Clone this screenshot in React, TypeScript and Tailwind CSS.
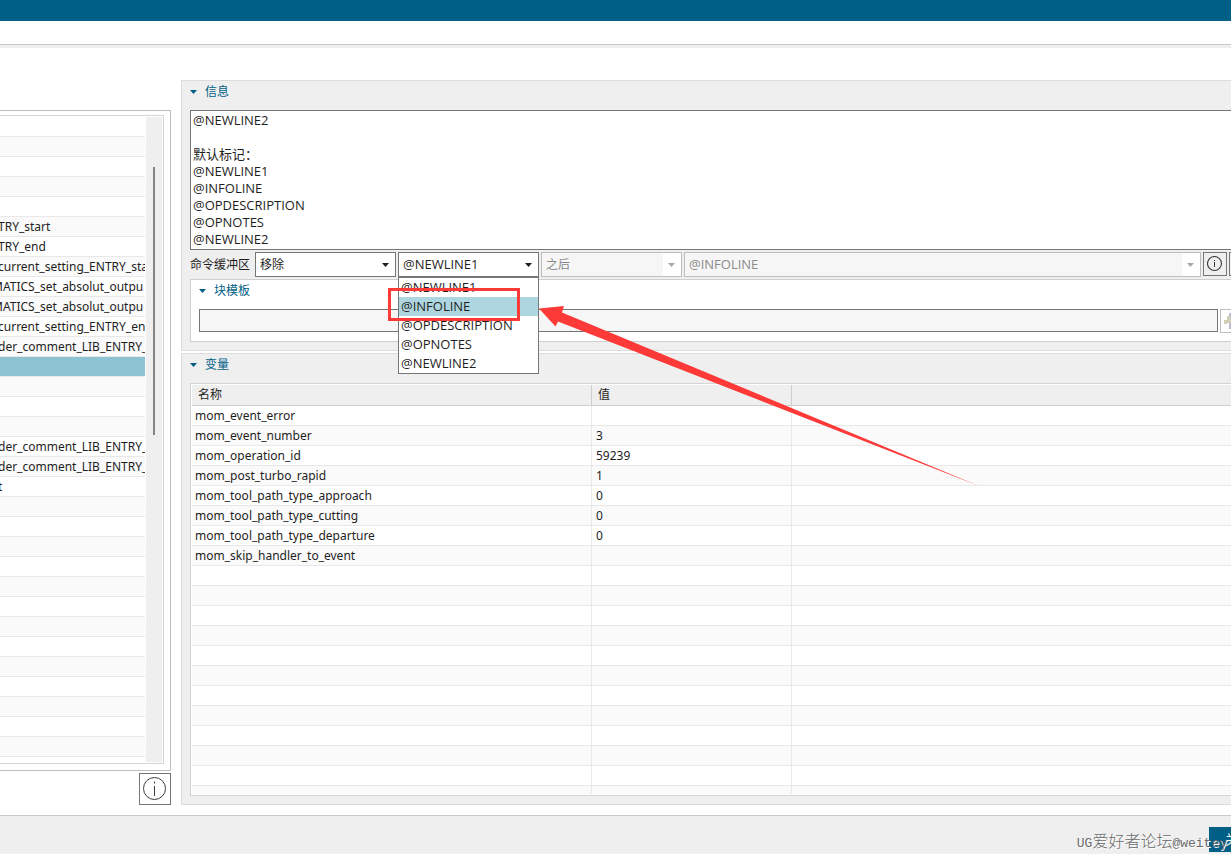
import type { ReactNode } from "react";
import clsx from "clsx";

type Row = { name: string; value?: string };

const MESSAGE = [
  "@NEWLINE2",
  "",
  "默认标记：",
  "@NEWLINE1",
  "@INFOLINE",
  "@OPDESCRIPTION",
  "@OPNOTES",
  "@NEWLINE2",
].join("\n");

const MARKERS = ["@NEWLINE1", "@INFOLINE", "@OPDESCRIPTION", "@OPNOTES", "@NEWLINE2"];

const VARIABLES: Row[] = [
  { name: "mom_event_error" },
  { name: "mom_event_number", value: "3" },
  { name: "mom_operation_id", value: "59239" },
  { name: "mom_post_turbo_rapid", value: "1" },
  { name: "mom_tool_path_type_approach", value: "0" },
  { name: "mom_tool_path_type_cutting", value: "0" },
  { name: "mom_tool_path_type_departure", value: "0" },
  { name: "mom_skip_handler_to_event" },
];

const EVENTS: Record<number, string> = {
  5: "TRY_start",
  6: "TRY_end",
  7: "current_setting_ENTRY_sta",
  8: "MATICS_set_absolut_outpu",
  9: "MATICS_set_absolut_outpu",
  10: "current_setting_ENTRY_en",
  11: "der_comment_LIB_ENTRY_",
  16: "der_comment_LIB_ENTRY_",
  17: "der_comment_LIB_ENTRY_",
  18: "t",
};

const EVENT_ROWS = 33;
const SELECTED_EVENT = 12;
const VARIABLE_ROWS = 20;

function Caret({ className }: { className?: string }) {
  return (
    <svg viewBox="0 0 7 4" className={clsx("h-1 w-[7px]", className)} aria-hidden="true">
      <path d="M0 0h7L3.5 4z" fill="currentColor" />
    </svg>
  );
}

function InfoIcon() {
  return (
    <svg viewBox="0 0 24 24" width={24} height={24} fill="none" stroke="#3c3c3c" aria-hidden="true">
      <circle cx="11.5" cy="11.5" r="11" />
      <path d="M11.5 9v10M11.5 4.5v2" />
    </svg>
  );
}

function SmallInfoIcon() {
  return (
    <svg viewBox="0 0 16 16" width={16} height={16} fill="none" stroke="#3c3c3c" aria-hidden="true">
      <circle cx="7.5" cy="7.5" r="7" strokeWidth="1.1" />
      <path d="M7.5 6v5M7.5 4v1" />
    </svg>
  );
}

function SectionTitle({ children }: { children: ReactNode }) {
  return (
    <h2 className="flex h-[22px] items-center gap-2 text-[12px] text-[#005f87]">
      <Caret />
      {children}
    </h2>
  );
}

type ComboProps = {
  label: string;
  value: string;
  options?: string[];
  disabled?: boolean;
  className?: string;
  children?: ReactNode;
};

function Combo({ label, value, options = [value], disabled, className, children }: ComboProps) {
  return (
    <div className={clsx("relative h-[25px]", className)}>
      <select
        aria-label={label}
        defaultValue={value}
        disabled={disabled}
        className={clsx(
          "h-full w-full appearance-none border pl-1 pr-5 opacity-100",
          disabled
            ? "border-[#bdbdbd] bg-[#f6f6f6] text-[#8a8a8a]"
            : "border-[#767676] bg-white text-[#1e1e1e]",
        )}
      >
        {options.map((option) => (
          <option key={option}>{option}</option>
        ))}
      </select>
      <span
        className={clsx(
          "pointer-events-none absolute inset-y-px right-px flex w-[18px] items-center justify-center bg-white pr-px",
          disabled ? "text-[#a8a8a8]" : "text-[#1e1e1e]",
        )}
      >
        <Caret />
      </span>
      {children}
    </div>
  );
}

function MarkerPopup() {
  return (
    <ul
      role="listbox"
      aria-label="标记"
      className="absolute inset-x-0 top-full z-10 border border-[#767676] bg-white leading-[19px]"
    >
      {MARKERS.map((marker) => (
        <li
          key={marker}
          role="option"
          aria-selected={marker === "@INFOLINE"}
          className={clsx("h-[19px] pl-[2px]", marker === "@INFOLINE" && "bg-[#aed6e0]")}
        >
          {marker}
        </li>
      ))}
    </ul>
  );
}

function EventList() {
  return (
    <div className="border-y border-r border-[#bdbdbd] pb-1.5 pr-[6px] pt-1">
      <div className="flex h-[649px] justify-between overflow-hidden border-y border-r border-[#d4d4d4] py-px pr-px">
        <table className="h-0 w-[145px] table-fixed border-separate border-spacing-0 font-['Noto_Sans',sans-serif] text-[12px]">
          <tbody>
            {Array.from({ length: EVENT_ROWS }, (_, i) => (
              <tr
                key={i}
                className={i === SELECTED_EVENT ? "bg-[#8cc2d2]" : i % 2 === 1 ? "bg-[#fafafa]" : "bg-white"}
              >
                <td className="overflow-hidden whitespace-nowrap border-b border-[#e8e8e8] p-0">
                  <div className={clsx("h-[19px] leading-[19px]", EVENTS[i]?.startsWith("M") ? "-ml-2" : "-ml-0.5")}>
                    {EVENTS[i]}
                  </div>
                </td>
              </tr>
            ))}
          </tbody>
        </table>
        <div className="w-4 bg-[#efefef] pt-[50px]">
          <div className="mx-auto h-[268px] w-[2px] bg-[#868686]" />
        </div>
      </div>
    </div>
  );
}

function VariableTable() {
  return (
    <div className="h-[413px] overflow-hidden border border-[#d4d4d4] bg-white p-px">
      <div className="h-full overflow-hidden">
        <table className="w-full table-fixed border-separate border-spacing-0 text-left font-['Noto_Sans','Noto_Sans_CJK_SC',sans-serif] text-[12px]">
          <colgroup>
            <col className="w-[400px]" />
            <col className="w-[200px]" />
            <col />
          </colgroup>
          <thead>
            <tr className="bg-[#efefef]">
              <th className="h-[21px] border-b border-r border-[#cfcfcf] p-0 pl-[6px] font-normal leading-5">名称</th>
              <th className="border-b border-r border-[#cfcfcf] p-0 pl-[6px] font-normal leading-5">值</th>
              <th className="border-b border-[#cfcfcf] p-0" />
            </tr>
          </thead>
          <tbody>
            {Array.from({ length: VARIABLE_ROWS }, (_, i) => (
              <tr key={i} className={clsx(i % 2 === 1 && "bg-[#fafafa]")}>
                <td className="h-5 border-b border-r border-[#e8e8e8] p-0 pl-[3px] leading-[19px]">
                  {VARIABLES[i]?.name}
                </td>
                <td className="border-b border-r border-[#e8e8e8] p-0 pl-1 leading-[19px]">{VARIABLES[i]?.value}</td>
                <td className="border-b border-[#e8e8e8] p-0" />
              </tr>
            ))}
          </tbody>
        </table>
      </div>
    </div>
  );
}

function TemplateIcon() {
  return (
    <svg viewBox="0 0 16 18" width={16} height={18} aria-hidden="true">
      <path d="M5 1h10v16H5z" fill="#b9b9d2" />
      <path d="M7 3h6v12H7z" fill="#a2a2a8" />
      <path d="M0 8h3V4h3v3h2v4H3v1H0z" fill="#d2d0b4" />
    </svg>
  );
}

function Annotation() {
  return (
    <>
      <div className="pointer-events-none absolute left-[388px] top-[288px] z-20 h-[33px] w-[132px] border-3 border-[#fd3a38]" />
      <svg
        viewBox="0 0 444 184"
        className="pointer-events-none absolute left-[538px] top-[305px] z-20 h-[184px] w-[444px]"
        aria-hidden="true"
      >
        <path d="M1 3.5 26 1 24 7.5 441 181 20 16.5 17.5 21.5z" fill="#fd3a38" />
      </svg>
    </>
  );
}

export default function App() {
  return (
    <div className="relative flex min-h-screen flex-col overflow-hidden bg-white font-['Open_Sans','Noto_Sans_CJK_SC',sans-serif] text-[13px] text-[#1e1e1e]">
      <header className="h-12 border-b-3 border-[#efefef]">
        <div className="h-[21px] bg-[#005f87]" />
        <div className="h-6 border-b border-[#c8c8c8]" />
      </header>

      <main className="flex gap-[10px] pb-[10px] pt-8">
        <aside className="flex w-[171px] shrink-0 flex-col items-end pt-[30px]">
          <div className="w-full">
            <EventList />
          </div>
          <button
            type="button"
            aria-label="帮助"
            className="mt-[2px] flex size-8 shrink-0 items-center justify-center border border-[#767676] bg-white"
          >
            <InfoIcon />
          </button>
        </aside>

        <div className="-mr-8 flex min-w-0 flex-1 flex-col gap-[2px]">
          <section className="border border-[#dcdcdc] bg-[#efefef] pb-2 pl-2 pr-[9px]">
            <div className="h-[29px]">
              <SectionTitle>信息</SectionTitle>
            </div>
            <textarea
              readOnly
              aria-label="信息"
              defaultValue={MESSAGE}
              className="block h-[140px] w-full resize-none overflow-hidden border border-[#767676] bg-white px-[2px] py-px leading-[17px]"
            />
            <div className="mt-[2px] flex gap-[2px]">
              <span className="w-[63px] shrink-0 text-[12px] leading-[25px]">命令缓冲区</span>
              <Combo label="命令缓冲区" value="移除" className="w-[141px] shrink-0 text-[12px]" />
              <Combo label="标记" value="@NEWLINE1" options={MARKERS} className="w-[141px] shrink-0">
                <MarkerPopup />
              </Combo>
              <Combo label="位置" value="之后" disabled className="w-[141px] shrink-0 text-[12px]" />
              <Combo label="目标标记" value="@INFOLINE" disabled className="flex-1" />
              <button
                type="button"
                aria-label="信息"
                className="flex size-6 items-center justify-center border border-[#767676]"
              >
                <SmallInfoIcon />
              </button>
              <button type="button" aria-label="更多" className="size-6 border border-[#767676]" />
            </div>
            <div className="mt-[2px] border border-[#cfcfcf] bg-white px-2 pb-2">
              <div className="h-[29px]">
                <SectionTitle>块模板</SectionTitle>
              </div>
              <div className="flex gap-[2px]">
                <input
                  type="text"
                  aria-label="块模板"
                  readOnly
                  className="h-[23px] min-w-0 flex-1 border border-[#767676] bg-[#f6f6f6] px-1"
                />
                <button
                  type="button"
                  aria-label="编辑块模板"
                  className="flex size-6 items-center justify-center border border-[#bdbdbd]"
                >
                  <TemplateIcon />
                </button>
              </div>
            </div>
          </section>

          <section className="border border-[#dcdcdc] bg-[#efefef] px-2 pb-2">
            <div className="h-[29px]">
              <SectionTitle>变量</SectionTitle>
            </div>
            <VariableTable />
          </section>
        </div>
      </main>

      <footer className="flex flex-1 justify-end border-t border-[#c8c8c8] bg-[#efefef] pt-[11px]">
        <button type="button" className="-mr-9 h-[25px] w-[58px] bg-[#005f87] text-white">
          关闭
        </button>
      </footer>

      <Annotation />
      <p className="pointer-events-none absolute bottom-0 right-1 z-20 whitespace-nowrap font-['Liberation_Mono','Noto_Sans_CJK_SC',monospace] text-[13px] leading-5 text-[#6a6a6a] [text-shadow:1px_1px_0_#fff]">
        UG<span className="text-[16px] font-light">爱好者论坛</span>@weitey
      </p>
    </div>
  );
}
